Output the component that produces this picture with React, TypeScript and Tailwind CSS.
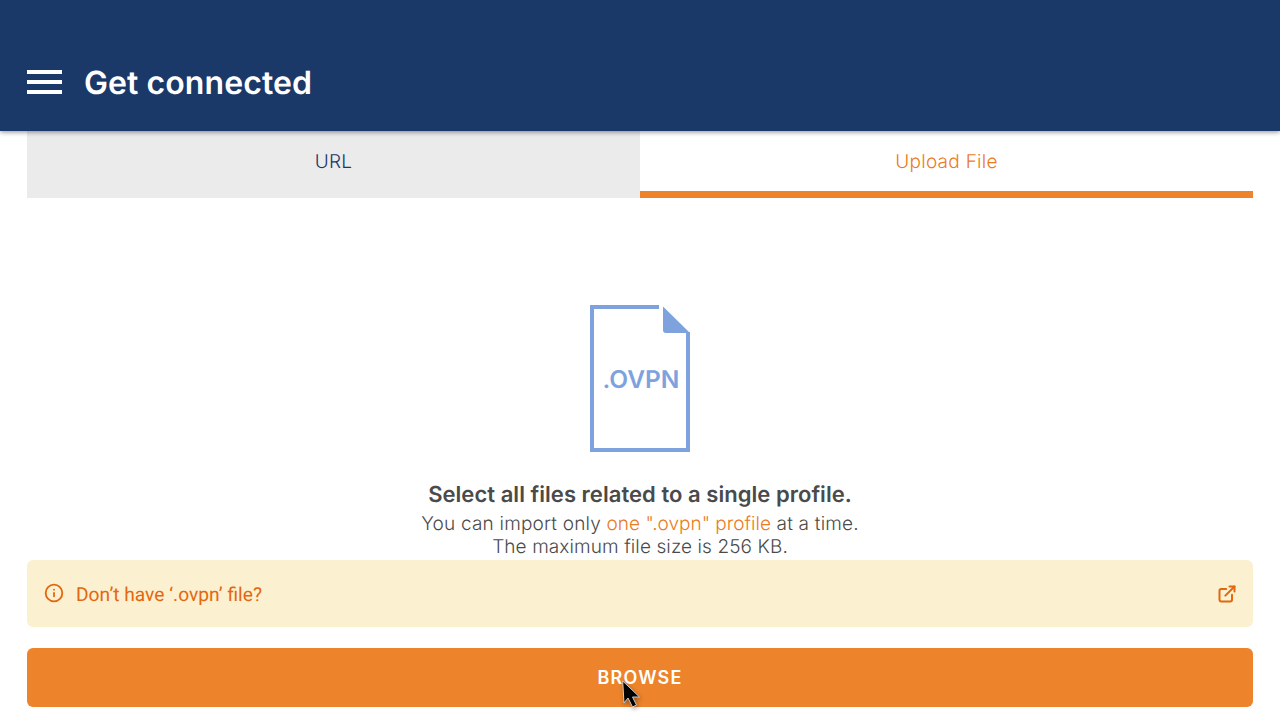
import React from 'react';
import { Info, ExternalLink } from 'lucide-react';

const App: React.FC = () => {
  return (
    <div className="relative h-[720px] w-[1280px] overflow-hidden bg-white font-['Inter',sans-serif] [text-rendering:geometricPrecision]">
      {/* Header */}
      <header className="relative z-10 flex h-[131px] items-center bg-[#1a3868] pt-[33px] pl-[27px] shadow-[0_1px_5px_rgba(0,0,0,0.45)]">
        <div className="flex h-[24px] w-[35px] flex-col justify-between">
          <div className="h-[4px] bg-white"></div>
          <div className="h-[4px] bg-white"></div>
          <div className="h-[4px] bg-white"></div>
        </div>
        <h1 className="mt-[2px] ml-[22px] text-[32px] leading-[44px] font-semibold tracking-[0.08px] text-white">Get connected</h1>
      </header>

      <div className="px-[27px]">
        {/* Tabs */}
        <div className="flex h-[67px]">
          <div className="flex w-1/2 items-start justify-center bg-[#ebebeb] pt-[18px] text-[19px] leading-[25px] font-[350] tracking-[0.27px] text-[#1a3868]">URL</div>
          <div className="flex w-1/2 items-start justify-center border-b-[7px] border-[#ed832a] pt-[18px] text-[19px] leading-[25px] font-[350] tracking-[0.27px] text-[#eb7a1e]">Upload File</div>
        </div>

        {/* Upload */}
        <div className="flex flex-col items-center pt-[107px]">
          <svg width="100" height="147" viewBox="0 0 100 147" fill="none">
            <path d="M69 2H2V145H98V27" stroke="#7da2dd" strokeWidth="4" />
            <path d="M73 1.5L100 28H76C74 28 73 27 73 25Z" fill="#7da2dd" />
            <text x="51" y="83" textAnchor="middle" fill="#7da2dd" fontFamily="'Inter',sans-serif" fontSize="24.5" fontWeight="600">.OVPN</text>
          </svg>
          <h2 className="mt-[29px] text-[22px] leading-[29px] font-semibold tracking-[0.04px] text-[#4a4a4a]">Select all files related to a single profile.</h2>
          <p className="mt-[2px] text-center text-[19px] leading-[23px] font-[350] tracking-[0.2px] text-[#4a4a4a]">
            You can import only <span className="tracking-normal text-[#eb7a1e]">one ".ovpn" profile</span> at a time.
            <br />
            <span className="tracking-[0.1px]">The maximum file size is 256 KB.</span>
          </p>
        </div>

        {/* Notice */}
        <div className="mt-[2px] flex h-[67px] items-center justify-between rounded-[6px] bg-[#fbf0cf] pr-[16px] pl-[17px] font-['Roboto',sans-serif] text-[19.2px] text-[#e3670f]">
          <div className="flex items-center gap-[12px]">
            <Info size={20} strokeWidth={2.2} />
            <span className="mt-[3px]">Don’t have ‘.ovpn’ file?</span>
          </div>
          <ExternalLink size={20} strokeWidth={2.4} />
        </div>

        <button className="mt-[21px] flex h-[59px] w-full items-center justify-center rounded-[6px] bg-[#ed832a] text-[18px] font-semibold tracking-[1.2px] text-white">
          BROWSE
        </button>
      </div>

      {/* Mouse pointer */}
      <svg className="absolute top-[679px] left-[621px] drop-shadow-[1px_2px_2px_rgba(0,0,0,0.35)]" width="22" height="32" viewBox="0 0 22 32">
        <path d="M1.7 2L3 24L7 19L11.5 28L15.5 26L11.5 18H18.5Z" fill="#000" stroke="#ccc" strokeWidth="1" />
      </svg>
    </div>
  );
};

export default App;
